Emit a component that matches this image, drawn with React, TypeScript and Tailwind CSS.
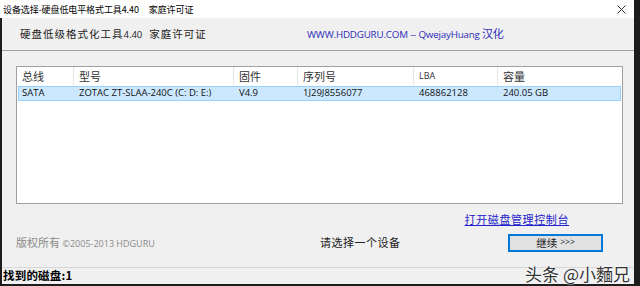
import React from "react";

const cjk = { fontFamily: '"Noto Sans CJK SC", "Noto Sans", sans-serif' };
const latin = { fontFamily: '"Open Sans", "Noto Sans CJK SC", sans-serif' };

const cols = [
  { label: "总线", value: "SATA", w: "w-[57px]" },
  { label: "型号", value: "ZOTAC ZT-SLAA-240C (C: D: E:)", w: "w-[160px]" },
  { label: "固件", value: "V4.9", w: "w-[64px]" },
  { label: "序列号", value: "1J29J8556077", w: "w-[116px]" },
  { label: "LBA", value: "468862128", w: "w-[84px]" },
  { label: "容量", value: "240.05 GB", w: "flex-1" },
];

export default function App() {
  return (
    <div className="w-[640px] h-[286px] bg-[#1c1c1c] overflow-hidden flex" style={cjk}>
      <div className="w-[634px] h-[284px] flex flex-col bg-[#f0f0f0]">
        {/* title bar */}
        <div className="h-[18px] bg-white flex items-center justify-between pl-[3px] pr-[8px] text-[9px] text-black leading-none">
          <span className="tracking-[-0.1px]">
            设备选择-硬盘低电平格式工具4.40<span className="ml-[10px]">家庭许可证</span>
          </span>
          <svg width="9" height="9" viewBox="0 0 9 9" className="text-[#333]">
            <path d="M0.5 0.5L8.5 8.5M8.5 0.5L0.5 8.5" stroke="currentColor" strokeWidth="1" />
          </svg>
        </div>

        <div className="flex-1 flex border-l-[2px] border-[#1c1c1c] flex-col">
          {/* header */}
          <div className="h-[33px] flex items-center border-b border-[#a0a0a0] pl-[18px]">
            <span className="text-[10.5px] tracking-[1px] text-[#222] w-[287px]">
              硬盘低级格式化工具<span className="text-[9.5px] tracking-normal" style={latin}>4.40</span>
              <span className="ml-[7px]">家庭许可证</span>
            </span>
            <span className="text-[9.8px] text-[#2b2bb8] tracking-[-0.2px]" style={latin}>
              WWW.HDDGURU.COM -- QwejayHuang <span style={cjk} className="text-[11px]">汉化</span>
            </span>
          </div>

          {/* table */}
          <div className="mt-[15px] ml-[14px] w-[607px] h-[138px] bg-white border border-[#a0a0a0] flex flex-col">
            <div className="h-[18px] flex items-center text-[11px] text-[#333]">
              {cols.map((c, i) => (
                <div key={i} className={`${c.w} h-full flex items-center pl-[5px] ${i < cols.length - 1 ? "border-r border-[#e5e5e5]" : ""}`}>
                  {c.label === "LBA" ? <span className="text-[9px]" style={latin}>LBA</span> : c.label}
                </div>
              ))}
            </div>
            <div className="mt-[1px] mx-[1px] h-[15px] flex items-center bg-[#cce8ff] border border-[#99d1ff] text-[9.5px] text-[#111]" style={latin}>
              {cols.map((c, i) => (
                <div key={i} className={`${c.w} pl-[3px] whitespace-nowrap`}>
                  {c.value}
                </div>
              ))}
            </div>
          </div>

          {/* link */}
          <div className="h-[23px] flex items-end justify-end pr-[65px]">
            <span className="text-[11px] text-[#2222cc] underline tracking-[0.6px]">打开磁盘管理控制台</span>
          </div>

          {/* bottom row */}
          <div className="mt-[6px] h-[19px] flex items-center pl-[14px]">
            <span className="w-[304px] text-[#8a8a8a] text-[11px]">
              版权所有 <span className="text-[9px]" style={latin}>©2005-2013 HDGURU</span>
            </span>
            <span className="w-[188px] text-[11px] text-[#222] tracking-[0.5px]">请选择一个设备</span>
            <div className="w-[95px] h-[18px] bg-[#e1e1e1] border-[2px] border-[#0078d7] flex items-center justify-center text-[10.5px] text-[#222]">
              继续 <span className="ml-[3px] text-[8.5px]" style={latin}>&gt;&gt;&gt;</span>
            </div>
          </div>

          {/* status bar */}
          <div className="mt-[15px] flex-1 border-t border-[#d7d7d7] flex items-center justify-between pr-[4px]">
            <span className="text-[11.5px] font-bold text-black leading-none pl-[1px] tracking-[0.2px]">找到的磁盘:1</span>
            <span
              className="text-[17px] text-[#333] leading-none -mt-[6px]"
              style={{ textShadow: "0 0 2px #fff, 0 0 2px #fff" }}
            >
              头条 @小麵兄
            </span>
          </div>
        </div>
      </div>
    </div>
  );
}
